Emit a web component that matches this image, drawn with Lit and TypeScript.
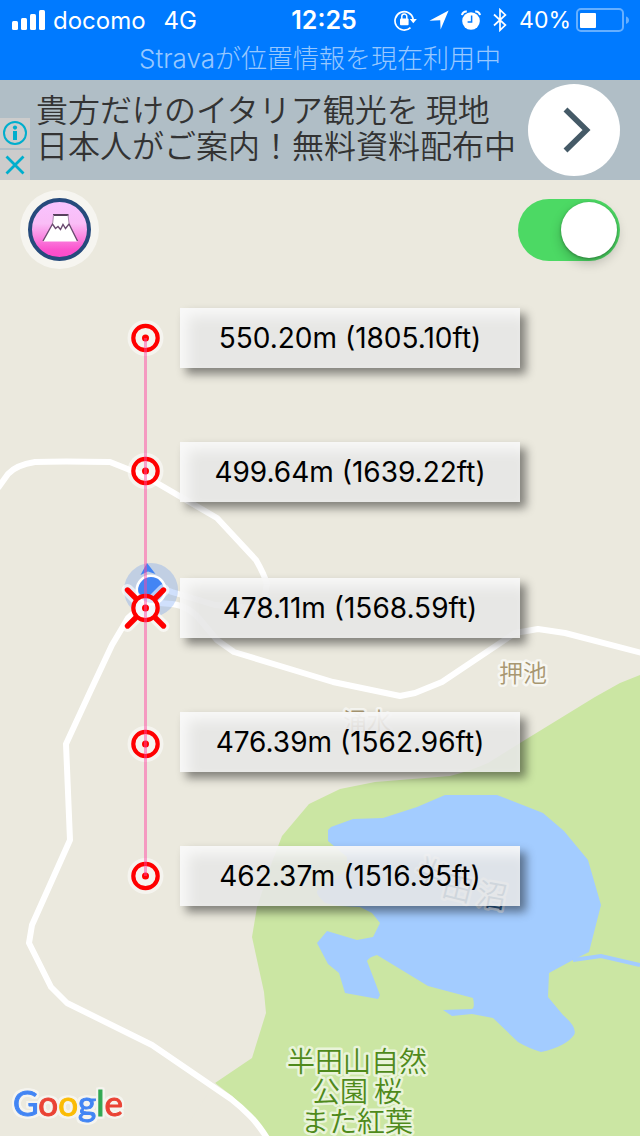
import { LitElement, html, css, svg } from "lit";
import { customElement, state } from "lit/decorators.js";

interface Reading {
  text: string;
  labelTop: number;
  markerY: number;
  current?: boolean;
}

const READINGS: Reading[] = [
  { text: "550.20m (1805.10ft)", labelTop: 39, markerY: 69 },
  { text: "499.64m (1639.22ft)", labelTop: 173, markerY: 202 },
  { text: "478.11m (1568.59ft)", labelTop: 309, markerY: 339, current: true },
  { text: "476.39m (1562.96ft)", labelTop: 443, markerY: 475 },
  { text: "462.37m (1516.95ft)", labelTop: 577, markerY: 607 },
];

@customElement("status-bar")
export class StatusBar extends LitElement {
  static styles = css`
    :host {
      display: block;
      height: 80px;
      background: #007aff;
      color: #fff;
      font-family: Inter, "Noto Sans CJK JP", sans-serif;
      font-size: 23px;
    }
    .row {
      display: grid;
      grid-template-columns: 1fr auto 1fr;
      align-items: center;
      height: 40px;
      padding: 0 4px 0 12px;
    }
    .left,
    .right {
      display: flex;
      align-items: center;
    }
    .left {
      gap: 8px;
      font-size: 24px;
    }
    .network {
      margin-left: 10px;
    }
    .time {
      font-size: 25px;
      font-weight: 600;
    }
    .right {
      justify-content: flex-end;
      gap: 12px;
      padding-right: 7px;
    }
    .power {
      display: flex;
      align-items: center;
      gap: 5px;
    }
    svg {
      display: block;
    }
    .notice {
      height: 38px;
      line-height: 38px;
      text-align: center;
      font-size: 26px;
      font-weight: 300;
      color: rgba(255, 255, 255, 0.6);
    }
  `;

  render() {
    return html`
      <div class="row">
        <div class="left">
          <svg width="33" height="20" viewBox="0 0 33 20" fill="#fff" aria-hidden="true">
            <rect x="0" y="11" width="6" height="9" rx="1.5" />
            <rect x="9" y="8" width="6" height="12" rx="1.5" />
            <rect x="18" y="4" width="6" height="16" rx="1.5" />
            <rect x="27" y="0" width="6" height="20" rx="1.5" />
          </svg>
          <span>docomo</span>
          <span class="network">4G</span>
        </div>
        <span class="time">12:25</span>
        <div class="right">
          <svg width="23" height="22" viewBox="0 0 23 22" aria-hidden="true">
            <path d="M16.5 18.6A9.2 9.2 0 1 1 19.2 10" fill="none" stroke="#fff" stroke-width="1.7" />
            <path d="M15.8 10h7l-3.5 4.2z" fill="#fff" />
            <rect x="6" y="9.6" width="8.6" height="6.6" rx="1" fill="#fff" />
            <path d="M7.8 10V7.6a2.5 2.5 0 0 1 5 0V10" fill="none" stroke="#fff" stroke-width="1.5" />
          </svg>
          <svg width="20" height="20" viewBox="0 0 20 20" aria-hidden="true">
            <path d="M19.6 0.4 11.6 19.6 11.2 10.2 0.4 10.8z" fill="#fff" />
          </svg>
          <svg width="20" height="20" viewBox="0 0 20 20" aria-hidden="true">
            <circle cx="10" cy="11" r="8.8" fill="#fff" />
            <path d="M1 5.2A4.6 4.6 0 0 1 5.8 1.4M19 5.2A4.6 4.6 0 0 0 14.2 1.4" fill="none" stroke="#fff" stroke-width="2" />
            <path d="M10.6 5.4V12H6.6" fill="none" stroke="#007aff" stroke-width="1.5" />
          </svg>
          <svg width="14" height="24" viewBox="0 0 14 24" aria-hidden="true">
            <path d="M1 6.5 12.4 17 7 22.2V1.8L12.4 7 1 17.5" fill="none" stroke="#fff" stroke-width="1.7" />
          </svg>
          <div class="power">
            <span>40%</span>
            <svg width="53" height="24" viewBox="0 0 53 24" aria-hidden="true">
              <rect x="1" y="1" width="46" height="22" rx="4" fill="none" stroke="#66afff" stroke-width="2" />
              <rect x="4" y="5" width="16" height="15" rx="1" fill="#fff" />
              <path d="M50 8.5q3 1 3 3.7t-3 3.7z" fill="#66afff" />
            </svg>
          </div>
        </div>
      </div>
      <div class="notice">Stravaが位置情報を現在利用中</div>
    `;
  }
}

@customElement("ad-banner")
export class AdBanner extends LitElement {
  static styles = css`
    :host {
      display: flex;
      align-items: center;
      height: 100px;
      padding-right: 20px;
      background: #b0bec6;
      font-family: "Noto Sans CJK JP", sans-serif;
    }
    button {
      display: block;
      border: 0;
      margin: 0;
      padding: 0;
      cursor: pointer;
    }
    svg {
      display: block;
    }
    .choices {
      display: flex;
      flex-direction: column;
      align-self: flex-end;
      gap: 2px;
    }
    .choice {
      width: 30px;
      height: 30px;
      background: #ccc;
    }
    .copy {
      flex: 1;
      padding: 0 0 8px 6px;
      font-size: 32px;
      line-height: 36px;
      font-weight: 350;
      color: #333;
      text-decoration: none;
      white-space: nowrap;
    }
    .go {
      flex: none;
      width: 92px;
      height: 92px;
      border-radius: 50%;
      background: #fff;
    }
  `;

  render() {
    return html`
      <div class="choices">
        <button class="choice" aria-label="広告情報">
          <svg width="30" height="30" viewBox="0 0 30 30">
            <circle cx="15" cy="15" r="11" fill="none" stroke="#00aecd" stroke-width="2" />
            <circle cx="15" cy="9.6" r="2.1" fill="#00aecd" />
            <path d="M13 13h4v9h-4z" fill="#00aecd" />
          </svg>
        </button>
        <button class="choice" aria-label="広告を閉じる">
          <svg width="30" height="30" viewBox="0 0 30 30">
            <path d="M6.5 6.5 23.5 23.5M23.5 6.5 6.5 23.5" stroke="#00aecd" stroke-width="2.8" />
          </svg>
        </button>
      </div>
      <a class="copy" href="#">貴方だけのイタリア観光を 現地<br />日本人がご案内！無料資料配布中</a>
      <button class="go" aria-label="開く">
        <svg width="92" height="92" viewBox="0 0 92 92">
          <path d="M37.5 25.5 58.5 46 37.5 66.5" fill="none" stroke="#455a67" stroke-width="5.6" />
        </svg>
      </button>
    `;
  }
}

const terrain = svg`
  <rect x="0" y="180" width="640" height="956" fill="#ebe9de" />
  <path fill="#cbe6a3" d="M640 675 620 683 595 697 520 743 488 763Q470 771 450 776L375 782 340 789 309 804 282 836 272 862 257 907 252 937 264 992 266 1013 252 1058 215 1083 267 1136H640z" />
  <path fill="#a3ccff" d="M328 830 331 827 353 819 383 818 417 807 445 795H497L543 813 564 831 588 860 601 905 589 952 573 960 549 973 548 997 563 1015Q578 1028 574 1035 565 1047 541 1052 528 1048 518 1042L493 1018 472 1014 452 1016 443 1010 472 1009Q475 1008 473 998L428 986 377 955Q369 957 367 961L380 995 378 999 345 993 339 973 328 964 317 943 327 931 357 940 373 937 380 923 372 913 360 907 340 906 325 903Q314 893 318 890L347 870V857L328 841z" />
  <path fill="none" stroke="#a3ccff" stroke-width="4" d="M573 960 601 956 640 965" />
  <path fill="#ebe9de" d="M215 1083 232 1096 248 1112 267 1136H180z" />
  <g fill="none" stroke="#fff" stroke-width="6" stroke-linejoin="round">
    <path d="M-2 488 8 474Q16 465 35 462 60 461 110 462L145 476 217 518 256 560Q264 574 267 584L263 603" />
    <path d="M267 1138Q258 1124 250 1116 240 1106 231 1099L152 1045 67 1003 51 987 29 943 32 925 70 840 66 744 90 692 112 645 128 618 146 602 172 604Q190 606 202 622L217 640 234 652 333 682 400 696 415 693 442 682 515 633 538 629 565 633 642 653" />
    <path d="M151 584 172 592 215 605 265 609" />
  </g>
  <g class="place">
    <text x="523" y="682" font-size="24" fill="#a89771">押池</text>
    <text x="367" y="730" font-size="24" fill="#a89771">涌水</text>
    <g font-size="28" fill="#4f8a1b">
      <text x="357" y="1072">半田山自然</text>
      <text x="357" y="1102">公園 桜</text>
      <text x="357" y="1132">また紅葉</text>
    </g>
    <g font-size="30" fill="#2f6296">
      <text transform="translate(426 882) rotate(24)">半</text>
      <text transform="translate(455 899) rotate(14)">田</text>
      <text transform="translate(490 906) rotate(10)">沼</text>
    </g>
  </g>
  <circle cx="151" cy="590" r="27" fill="#4285f4" opacity="0.25" />
  <path d="M147 563 155.500 574 148 571.500 140.500 575z" fill="#4285f4" />
  <circle cx="151" cy="590" r="14.200" fill="#4285f4" stroke="#fff" stroke-width="2.600" />
`;

@customElement("app-root")
export class AppRoot extends LitElement {
  @state() private tracking = true;

  static styles = css`
    :host {
      display: flex;
      flex-direction: column;
      min-height: 100vh;
      font-family: Inter, "Noto Sans CJK JP", sans-serif;
    }
    .map {
      position: relative;
      flex: 1;
      display: flex;
      flex-direction: column;
      overflow: hidden;
      background: #ebe9de;
    }
    .terrain {
      position: absolute;
      inset: 0;
      width: 100%;
      height: 100%;
    }
    .place text {
      font-family: "Noto Sans CJK JP", sans-serif;
      font-weight: 350;
      text-anchor: middle;
      paint-order: stroke;
      stroke: rgba(255, 255, 255, 0.6);
      stroke-width: 5px;
      stroke-linejoin: round;
    }
    .controls {
      position: relative;
      display: flex;
      align-items: center;
      justify-content: space-between;
      padding: 10px 20px 0;
    }
    .peak {
      width: 79px;
      height: 79px;
      padding: 0;
      border: 0;
      background: none;
      cursor: pointer;
    }
    .peak svg {
      display: block;
    }
    .toggle {
      appearance: none;
      width: 102px;
      height: 62px;
      margin: 0;
      padding: 3px;
      border-radius: 31px;
      background: #d8d8d8;
      display: flex;
      cursor: pointer;
    }
    .toggle::before {
      content: "";
      width: 56px;
      height: 56px;
      border-radius: 50%;
      background: #fff;
      box-shadow: 0 5px 12px rgba(0, 0, 0, 0.22), 0 1px 3px rgba(0, 0, 0, 0.3);
    }
    .toggle:checked {
      background: #4cd964;
      justify-content: flex-end;
    }
    .readings {
      position: relative;
      flex: 1;
      min-height: 660px;
      margin: 0;
      padding: 0;
      list-style: none;
    }
    .marker {
      position: absolute;
      left: 120px;
      margin-top: -24px;
    }
    .axis {
      position: absolute;
      left: 144px;
      width: 3px;
      background: rgba(255, 70, 160, 0.48);
    }
    .label {
      position: absolute;
      left: 180px;
      width: 340px;
      height: 60px;
      line-height: 60px;
      text-align: center;
      font-size: 28px;
      color: #000;
      background: rgba(230, 230, 230, 0.88);
      box-shadow: inset 8px 8px 14px rgba(255, 255, 255, 0.75),
        6px 6px 9px rgba(0, 0, 0, 0.45);
    }
    .logo {
      align-self: flex-start;
      padding: 0 0 14px 13px;
      font-family: Lato, sans-serif;
      font-size: 35px;
      line-height: 40px;
      text-decoration: none;
      filter: drop-shadow(2px 0 0 #f5f4ef) drop-shadow(-2px 0 0 #f5f4ef)
        drop-shadow(0 2px 0 #f5f4ef) drop-shadow(0 -2px 0 #f5f4ef);
    }
    .logo span {
      -webkit-text-stroke: 1px currentcolor;
    }
    .blue {
      color: #4285f4;
    }
    .red {
      color: #ea4335;
    }
    .yellow {
      color: #fbbc05;
    }
    .green {
      color: #34a853;
    }
  `;

  private marker(reading: Reading) {
    return html`<svg
      class="marker"
      style="top:${reading.markerY}px"
      width="51"
      height="48"
      viewBox="-25.5 -24 51 48"
      aria-hidden="true"
    >
      ${reading.current
        ? svg`
          <path d="M-18-18 18 18M18-18-18 18" stroke="#fff" stroke-opacity="0.600" stroke-width="12" stroke-linecap="round" />
          <path d="M-18-18-10-10M18 18 10 10M18-18 10-10M-18 18-10 10" stroke="#f00" stroke-width="5.400" stroke-linecap="round" />
          <circle r="13" fill="#fff" fill-opacity="0.500" />`
        : svg`<circle r="18" fill="#fff" fill-opacity="0.500" />`}
      <circle r="12.200" fill="none" stroke="#f00" stroke-width="4.200" />
      <circle r="3.500" fill="#f00" />
    </svg>`;
  }

  render() {
    const first = READINGS[0].markerY;
    const last = READINGS[READINGS.length - 1].markerY;
    return html`
      <status-bar></status-bar>
      <ad-banner></ad-banner>
      <main class="map">
        <svg class="terrain" viewBox="0 180 640 956" preserveAspectRatio="xMinYMin slice">${terrain}</svg>
        <div class="controls">
          <button class="peak" aria-label="山">
            <svg width="79" height="79" viewBox="0 0 79 79">
              <defs>
                <linearGradient id="sky" x1="0" y1="0" x2="0" y2="1">
                  <stop offset="0" stop-color="#f8c4ff" />
                  <stop offset="0.4" stop-color="#f9bdf6" />
                  <stop offset="0.85" stop-color="#fb52cd" />
                  <stop offset="1" stop-color="#fa48c8" />
                </linearGradient>
              </defs>
              <circle cx="39.500" cy="39.500" r="39.500" fill="#fff" fill-opacity="0.550" />
              <circle cx="39.500" cy="39.500" r="29.500" fill="url(#sky)" stroke="#264a7c" stroke-width="4" />
              <path d="M33.500 24.500H48L49 33 57.500 51.500H23L32.500 33z" fill="#fff" />
              <path d="M33 25H48.500" stroke="#57405c" stroke-width="2" />
              <path d="M23 51 32.500 34 35.500 38.500 38 36.500 40.500 39.500 43 34.500 45.500 38.500 49 34 57.500 51" fill="none" stroke="#6b4a70" stroke-width="1.400" />
              <path d="M33.500 25 32.700 33M48 25 49 33" stroke="#a98bab" stroke-width="1" />
            </svg>
          </button>
          <input
            class="toggle"
            type="checkbox"
            aria-label="追跡"
            .checked=${this.tracking}
            @change=${(e: Event) => (this.tracking = (e.target as HTMLInputElement).checked)}
          />
        </div>
        <ul class="readings">
          ${READINGS.map(
            (r) => html`<li>
              ${this.marker(r)}
              <span class="label" style="top:${r.labelTop}px">${r.text}</span>
            </li>`
          )}
          <li class="axis" style="top:${first}px;height:${last - first}px" aria-hidden="true"></li>
        </ul>
        <a class="logo" href="#" aria-label="Google"
          ><span class="blue">G</span><span class="red">o</span><span class="yellow">o</span
          ><span class="blue">g</span><span class="green">l</span><span class="red">e</span></a
        >
      </main>
    `;
  }
}
